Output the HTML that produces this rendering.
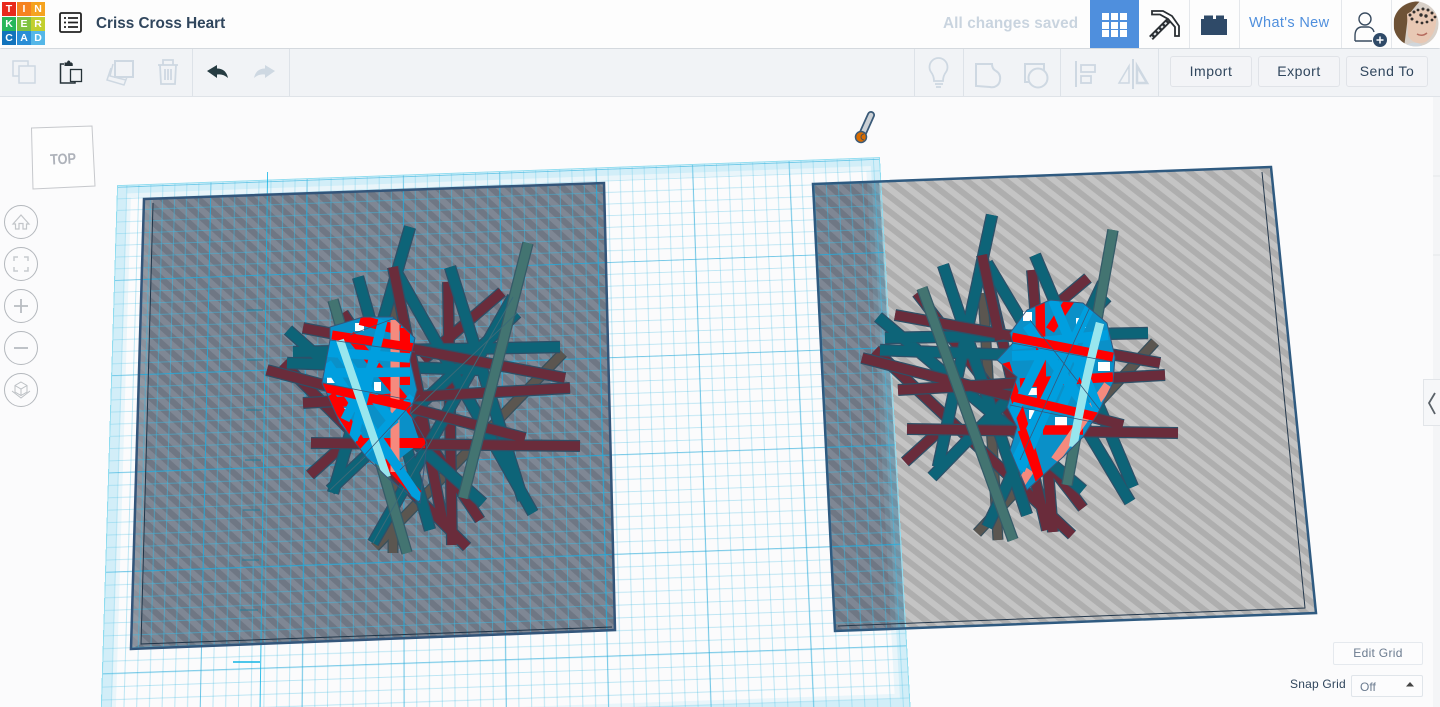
<!DOCTYPE html>
<html lang="en"><head><meta charset="utf-8"><title>Criss Cross Heart</title>
<style>
html,body{margin:0;padding:0;background:#fbfbfc;width:1440px;height:707px;overflow:hidden;font-family:"Liberation Sans",sans-serif}
#app{position:relative;width:1440px;height:707px;overflow:hidden;background:#fbfbfc}
.layer{position:absolute;left:0;top:0}
.plane{position:absolute;left:0;top:0;width:800px;height:600px;box-sizing:border-box;transform-origin:0 0;
transform:matrix3d(0.947964,-0.035591,0,-0.0000037384,-0.038203,0.843168,0,-0.00009773,0,0,1,0,118,186,0,1);
background-image:
linear-gradient(to right,rgba(30,165,215,.5) 1px,transparent 1px),
linear-gradient(to bottom,rgba(30,165,215,.5) 1px,transparent 1px),
linear-gradient(to right,rgba(60,185,225,.33) 1px,transparent 1px),
linear-gradient(to bottom,rgba(60,185,225,.33) 1px,transparent 1px);
background-size:101.3px 100%,100% 107px,12.66px 100%,100% 13.4px;
background-position:97.5px 0,0 1px,8.9px 0,0 1px}
.main{outline:1px solid #8fdcef}
.clipw{position:absolute;left:0;top:0;width:1440px;height:707px}
#band{position:absolute;inset:0;box-sizing:border-box;border:9px solid rgba(115,210,238,.3)}
#band2{position:absolute;inset:9px;box-sizing:border-box;border:5px solid rgba(115,210,238,.13)}
#origin{position:absolute;left:157px;top:-10px;bottom:0;width:1px;background:rgba(18,180,228,.85)}
#top{position:absolute;left:0;top:0;width:1440px;height:48px;background:#fdfdfd;box-shadow:0 1px 2px rgba(90,110,130,.35)}
#tools{position:absolute;left:0;top:49px;width:1440px;height:47px;background:#f1f3f6;border-bottom:1px solid #dfe3e8}
.t{position:absolute;white-space:nowrap}
.div{position:absolute;width:1px;background:#dde2e8}
.btn{position:absolute;top:7px;height:29px;background:#f3f4f7;border:1px solid #e0e3e8;border-radius:3px;box-sizing:content-box;text-align:center;line-height:29px;color:#30465d;font-size:14px;letter-spacing:.5px}
.logo{position:absolute;width:14px;height:14px;color:#fff;font-weight:bold;font-size:10.5px;line-height:14px;text-align:center}
</style></head><body><div id="app">

<svg class="layer" width="1440" height="707" viewBox="0 0 1440 707">
<defs>
<pattern id="sd" width="12" height="12" patternUnits="userSpaceOnUse" patternTransform="rotate(42)"><rect width="12" height="12" fill="#7f8794"/><rect width="12" height="6" fill="#6f7784"/></pattern>
<pattern id="sl" width="12" height="12" patternUnits="userSpaceOnUse" patternTransform="rotate(38)"><rect width="12" height="12" fill="#c4c4c4"/><rect width="12" height="6" fill="#aeaeae"/></pattern>
</defs>
<polygon points="144,199 604,183 615,630 131,649" fill="url(#sd)"/>
<polygon points="813,184 1271,167 1316,613 835,631" fill="url(#sl)"/>
<polygon points="813,184 879,181 905,629 835,631" fill="url(#sd)"/>
<polygon points="131,649 141,644 153,200 144,199" fill="#9ea3ab" opacity=".6"/>
</svg>

<div class="plane main"><div id="band"></div><div id="band2"></div><div id="origin"></div></div>
<div class="clipw" style="clip-path:polygon(144px 199px,604px 183px,615px 630px,131px 649px)"><div class="plane"></div></div>
<div class="clipw" style="clip-path:polygon(813px 184px,879px 181px,905px 629px,835px 631px)"><div class="plane"></div></div>

<svg class="layer" width="1440" height="707" viewBox="0 0 1440 707">
<defs>
<clipPath id="hl"><path d="M330,327 L363,317 L393,317 L415,338 L410,360 L417,390 L410,413 L427,443 L420,503 L390,480 L367,458 L340,423 L322,383 L330,340Z"/></clipPath>
<clipPath id="hr"><path d="M1010,333 L1027,310 L1050,300 L1083,303 L1107,323 L1115,357 L1113,383 L1098,413 L1083,437 L1063,457 L1027,490 L1010,450 L1017,427 L1007,407 L1017,377 L997,360 L1013,343Z"/></clipPath>
</defs>
<!-- ruler -->
<path d="M247,310H263M247,360H263M246,410H262M245,460H261M243,510H260M242,560H259M240,610H258" stroke="#1f7f9c" stroke-width="1" fill="none"/>
<path d="M233,662H260" stroke="#12b4e4" stroke-width="1.5" fill="none"/>
<!-- rectangle outlines -->
<polygon points="144,199 604,183 615,630 131,649" fill="none" stroke="#33557a" stroke-width="2.5"/>
<polyline points="153,203 141,644 612,627" fill="none" stroke="#1e3448" stroke-width="1"/>
<polygon points="813,184 1271,167 1316,613 835,631" fill="none" stroke="#2f5a80" stroke-width="2.5"/>
<polyline points="1262,172 1305,608 838,626" fill="none" stroke="#24384c" stroke-width="1"/>

<!-- left sticks -->
<g fill="none" stroke-linecap="butt">
<path stroke="#39505c" stroke-width="11" d="M563,353L375,547M393,553L393,303"/>
<path stroke="#5b5650" stroke-width="8.500" d="M563,353L375,547M393,553L393,303"/>
<path stroke="#2e4f66" stroke-width="12" d="M343,313L480,520M467,547L283,363M448,282L452,545M502,292L423,360M310,475L340,448M393,267L443,523"/>
<path stroke="#6a2c3b" stroke-width="9.500" d="M343,313L480,520M467,547L283,363M448,282L452,545M502,292L423,360M310,475L340,448M393,267L443,523"/>
<path stroke="#2d5068" stroke-width="12.500" d="M410,227L333,493M358,277L430,530M397,273L533,513M450,267L523,500M288,330L483,503M293,352L560,347M287,363L483,370M513,297L373,543M517,313L330,490"/>
<path stroke="#0d6478" stroke-width="10" d="M410,227L333,493M358,277L430,530M397,273L533,513M450,267L523,500M288,330L483,503M293,352L560,347M287,363L483,370M513,297L373,543M517,313L330,490"/>
<path stroke="#2e4f66" stroke-width="12" d="M303,328L565,378M267,370L525,438M303,403L570,388M311,443L580,446M393,267L420,400"/>
<path stroke="#6a2c3b" stroke-width="9.500" d="M303,328L565,378M267,370L525,438M303,403L570,388M311,443L580,446M393,267L420,400"/>
<path stroke="#355b68" stroke-width="11.500" d="M528,243L463,498M333,300L407,553"/>
<path stroke="#437471" stroke-width="9" d="M528,243L463,498M333,300L407,553"/>
<path stroke="#3a6a78" stroke-width="1" d="M517,313L330,490M513,297L373,543"/>
</g>
<!-- left heart -->
<path d="M330,327 L363,317 L393,317 L415,338 L410,360 L417,390 L410,413 L420,443 L385,470 L367,458 L340,423 L322,383 L330,340Z" fill="#0a90c8"/>
<g fill="#fff"><rect x="355" y="323" width="9" height="8"/><rect x="333" y="340" width="6" height="7"/><rect x="327" y="375" width="8" height="8"/><rect x="374" y="382" width="7" height="9"/><rect x="342" y="408" width="9" height="9"/><rect x="387" y="450" width="6" height="9"/><rect x="403" y="360" width="5" height="7"/></g>
<g clip-path="url(#hl)" fill="none">
<path stroke="#f00" stroke-width="10" d="M350,335L420,420M322,403L400,398M330,395L365,450M350,443L425,443M385,460L418,495M405,328L405,385M360,320L400,330"/>
<path stroke="#f58a7e" stroke-width="9" d="M395,320L395,472"/>
<path stroke="#009fdf" stroke-width="9.500" d="M327,363L420,500M325,352L410,358M322,373L410,372M413,397L363,453M330,340L395,425M345,420L375,360"/>
<path stroke="#f00" stroke-width="9" d="M332,335L415,348M322,387L410,407"/>
<path stroke="#009fdf" stroke-width="9.500" d="M383,320L353,440M358,430L345,450"/>
<path stroke="#98e6ee" stroke-width="8" d="M340,340L387,477"/>
</g>
<path d="M330,327 L363,317 L393,317 L415,338 L410,360 L417,390 L410,413 L427,443 L420,503 L390,480 L367,458 L340,423 L322,383 L330,340Z" fill="none" stroke="#37567a" stroke-width="1"/>
<path d="M330,340L415,352M322,383L410,400M350,335L395,318M400,470L427,443M360,460L420,395" fill="none" stroke="#37567a" stroke-width=".8"/>

<!-- right sticks -->
<g fill="none">
<path stroke="#39505c" stroke-width="11" d="M1155,342L977,533M983,293L998,540"/>
<path stroke="#5b5650" stroke-width="8.500" d="M1155,342L977,533M983,293L998,540"/>
<path stroke="#2e4f66" stroke-width="12" d="M917,293L1083,508M875,350L1072,535M982,255L1047,530M1032,270L1053,532M1088,278L1050,310M905,462L937,433"/>
<path stroke="#6a2c3b" stroke-width="9.500" d="M917,293L1083,508M875,350L1072,535M982,255L1047,530M1032,270L1053,532M1088,278L1050,310M905,462L937,433"/>
<path stroke="#2d5068" stroke-width="12.500" d="M992,215L938,467M943,265L1027,515M987,263L1130,502M1035,255L1133,487M878,317L1083,490M885,338L1148,333M880,350L1013,355M1103,283L987,527M1107,297L932,477"/>
<path stroke="#0d6478" stroke-width="10" d="M992,215L938,467M943,265L1027,515M987,263L1130,502M1035,255L1133,487M878,317L1083,490M885,338L1148,333M880,350L1013,355M1103,283L987,527M1107,297L932,477"/>
<path stroke="#2e4f66" stroke-width="12" d="M895,315L1160,363M862,358L1123,425M898,390L1165,375M907,429L1178,433M982,255L1000,340"/>
<path stroke="#6a2c3b" stroke-width="9.500" d="M895,315L1160,363M862,358L1123,425M898,390L1165,375M907,429L1178,433M982,255L1000,340"/>
<path stroke="#355b68" stroke-width="11.500" d="M1113,230L1067,485M922,288L1013,540"/>
<path stroke="#437471" stroke-width="9" d="M1113,230L1067,485M922,288L1013,540"/>
</g>
<!-- right heart -->
<path d="M1010,333 L1027,310 L1050,300 L1083,303 L1107,323 L1115,357 L1113,383 L1098,413 L1083,437 L1063,457 L1027,490 L1010,450 L1017,427 L1007,407 L1017,377 L997,360 L1013,343Z" fill="#0a90c8"/>
<g fill="#fff"><rect x="1023" y="312" width="9" height="9"/><rect x="1076" y="318" width="10" height="10"/><rect x="1098" y="362" width="12" height="9"/><rect x="1055" y="417" width="12" height="9"/><rect x="1028" y="388" width="10" height="7"/><rect x="1029" y="410" width="7" height="9"/><rect x="1020" y="447" width="6" height="7"/></g>
<g clip-path="url(#hr)" fill="none">
<path stroke="#f00" stroke-width="9.500" d="M1020,383L1113,377M1043,430L1083,430M1040,303L1042,413M1005,363L1040,480M1070,300L1050,330"/>
<path stroke="#f58a7e" stroke-width="9" d="M1108,385L1055,460M1030,470L1020,485"/>
<path stroke="#009fdf" stroke-width="10" d="M1053,300L1100,413M1090,307L1013,467M1027,325L1095,420M1108,335L1012,345M1012,356L1090,353M1075,345L1020,470M1010,420L1050,340M1090,340L1060,410"/>
<path stroke="#f00" stroke-width="9" d="M1012,337L1113,357M1013,397L1097,417"/>
<path stroke="#f00" stroke-width="9" d="M1022,430L1040,480"/>
<path stroke="#98e6ee" stroke-width="8.500" d="M1100,323Q1085,380 1073,447"/>
</g>
<path d="M1010,333 L1027,310 L1050,300 L1083,303 L1107,323 L1115,357 L1113,383 L1098,413 L1083,437 L1063,457 L1027,490 L1010,450 L1017,427 L1007,407 L1017,377 L997,360 L1013,343Z" fill="none" stroke="#37567a" stroke-width="1"/>
<path d="M1012,343L1113,362M1010,405L1097,423M1030,320L1100,410M1090,307L1020,460" fill="none" stroke="#37567a" stroke-width=".8"/>

<!-- cursor wrench -->
<path d="M871,115L862,135" stroke="#3a5a78" stroke-width="8" stroke-linecap="round"/>
<path d="M871,115L862,135" stroke="#ccd1d6" stroke-width="4.5" stroke-linecap="round"/>
<circle cx="861" cy="137" r="5.5" fill="#d96c00" stroke="#3a5a78" stroke-width="1.5"/>
<path d="M864,134A3,3 0 1 0 864,140" fill="none" stroke="#46505a" stroke-width="1"/>

<!-- view cube -->
<polygon points="31.500,128 92,126 95,186 33,189" fill="#fdfdfd" stroke="#c6c8cc" stroke-width="1"/>
<text x="63" y="164" font-family="Liberation Sans" font-size="15" font-weight="bold" fill="#aeb2ba" text-anchor="middle" textLength="26" lengthAdjust="spacingAndGlyphs" transform="rotate(-3 63 158)">TOP</text>
<!-- nav -->
<g fill="#fbfbfc" stroke="#b4b8bd" stroke-width="1">
<circle cx="21" cy="222" r="16.500"/><circle cx="21" cy="264" r="16.500"/><circle cx="21" cy="306" r="16.500"/><circle cx="21" cy="348" r="16.500"/><circle cx="21" cy="390" r="16.500"/>
</g>
<path d="M13,224L21,215L29,224H26.500V229H23V223.500H19V229H15.500V224Z" fill="none" stroke="#c2c5c9" stroke-width="1.2"/>
<path d="M14,261V257H18M24,257H28V261M28,267V271H24M18,271H14V267" fill="none" stroke="#c8cbcf" stroke-width="1.5"/>
<path d="M21,299V313M14,306H28" stroke="#b8bcc1" stroke-width="1.800"/>
<path d="M14,348H28" stroke="#b8bcc1" stroke-width="1.800"/>
<path d="M21,382L27,385.500V392L21,395.500L15,392V385.500ZM15,385.500L21,389L27,385.500M21,389V395.500M12,391L21,398L30,391" fill="none" stroke="#bcc0c4" stroke-width="1"/>

<!-- right gutter -->
<rect x="1433" y="97" width="7" height="610" fill="#f4f5f7"/>
<path d="M1433,176H1440M1433,255H1440" stroke="#e4e6ea"/>
<rect x="1423.500" y="379.500" width="17" height="46" fill="#f6f7f9" stroke="#e2e5e9"/>
<path d="M1435,393L1429,403L1435,414" fill="none" stroke="#5a6168" stroke-width="1.800"/>
</svg>

<div id="top">
<div class="logo" style="left:2px;top:2px;background:#e8291c">T</div>
<div class="logo" style="left:17px;top:2px;background:#f58220">I</div>
<div class="logo" style="left:31px;top:2px;background:#f5a31f">N</div>
<div class="logo" style="left:2px;top:17px;background:#27b65a">K</div>
<div class="logo" style="left:17px;top:17px;background:#7fc241">E</div>
<div class="logo" style="left:31px;top:17px;background:#c2cf2e">R</div>
<div class="logo" style="left:2px;top:31px;background:#1273bc">C</div>
<div class="logo" style="left:17px;top:31px;background:#2a8ed6">A</div>
<div class="logo" style="left:31px;top:31px;background:#55b7e8">D</div>
<svg class="layer" width="1440" height="48" viewBox="0 0 1440 48">
<rect x="60" y="13" width="21" height="19" rx="1.500" fill="#fff" stroke="#222" stroke-width="1.800"/>
<path d="M64,18H66M68,18H78M64,22.500H66M68,22.500H78M64,27H66M68,27H78" stroke="#222" stroke-width="1.800"/>
<rect x="1090" y="0" width="49" height="48" fill="#4f8fdd"/>
<g fill="#fff"><rect x="1102" y="13" width="7" height="7"/><rect x="1111" y="13" width="7" height="7"/><rect x="1120" y="13" width="7" height="7"/><rect x="1102" y="22" width="7" height="7"/><rect x="1111" y="22" width="7" height="7"/><rect x="1120" y="22" width="7" height="7"/><rect x="1102" y="30" width="7" height="7"/><rect x="1111" y="30" width="7" height="7"/><rect x="1120" y="30" width="7" height="7"/></g>
<path d="M1170,19L1151,38" stroke="#2a2f33" stroke-width="5.500"/>
<path d="M1170,19L1151,38" stroke="#e4e7ea" stroke-width="2" stroke-dasharray="2.500 2.500"/>
<path d="M1152,11H1163L1172,16L1179,26V36H1175V27L1168,19L1160,14.500H1152Z" fill="#fff" stroke="#2a2f33" stroke-width="1.800"/>
<path d="M1201,35V19H1204V15.500H1213V19H1216V15.500H1224V19H1227V35Z" fill="#2f4a68"/>
<circle cx="1365" cy="19" r="6" fill="none" stroke="#3a4c60" stroke-width="1.400"/>
<path d="M1355,41V36Q1355,28 1361,27H1369Q1373,28 1374,32M1355,41H1372" fill="none" stroke="#3a4c60" stroke-width="1.400"/>
<circle cx="1380" cy="40" r="7" fill="#2f4a68"/>
<path d="M1380,36.500V43.500M1376.500,40H1383.500" stroke="#fff" stroke-width="1.500"/>
<defs><clipPath id="av"><circle cx="1416" cy="24" r="22.500"/></clipPath></defs>
<g clip-path="url(#av)">
<rect x="1392" y="0" width="48" height="48" fill="#d8d0c8"/>
<path d="M1394,48V18Q1400,2 1420,1Q1412,10 1408,16L1404,48Z" fill="#6e5236"/>
<path d="M1420,1Q1432,4 1438,14L1436,5Z" fill="#8a6b4a"/>
<path d="M1407,14Q1422,4 1436,14Q1438,32 1426,42Q1414,46 1408,36Z" fill="#e8c8b4"/>
<g fill="#33302e"><circle cx="1410" cy="15" r="1.500"/><circle cx="1414" cy="12" r="1.500"/><circle cx="1418" cy="10" r="1.400"/><circle cx="1423" cy="9" r="1.500"/><circle cx="1428" cy="10" r="1.500"/><circle cx="1432" cy="13" r="1.500"/><circle cx="1435" cy="17" r="1.400"/><circle cx="1412" cy="19" r="1.500"/><circle cx="1417" cy="22" r="1.400"/><circle cx="1422" cy="23" r="1.400"/><circle cx="1427" cy="22" r="1.400"/><circle cx="1432" cy="20" r="1.400"/><circle cx="1421" cy="15" r="1.700"/><circle cx="1426" cy="16" r="1.700"/></g>
<path d="M1417,34Q1422,37 1427,33" stroke="#b56a5d" stroke-width="1.500" fill="none"/>
<path d="M1402,48Q1412,40 1420,44L1424,48Z" fill="#cfd6dc"/>
</g>
<path d="M1189.500,0V48M1239.500,0V48M1341.500,0V48M1391.500,0V48" stroke="#e4e7eb"/>
</svg>
<div class="t" style="left:96px;top:15px;font-size:15.300px;font-weight:bold;color:#30465d">Criss Cross Heart</div>
<div class="t" style="left:943px;top:15px;font-size:15.300px;font-weight:bold;color:#c9d4df;letter-spacing:.1px">All changes saved</div>
<div class="t" style="left:1249px;top:15px;font-size:14.500px;color:#4f8fdd;letter-spacing:.35px">What's New</div>
</div>

<div id="tools">
<div class="div" style="left:192px;top:0;height:47px"></div>
<div class="div" style="left:289px;top:0;height:47px"></div>
<div class="div" style="left:914px;top:0;height:47px"></div>
<div class="div" style="left:963px;top:0;height:47px"></div>
<div class="div" style="left:1060px;top:0;height:47px"></div>
<div class="div" style="left:1158px;top:0;height:47px"></div>
<svg class="layer" width="1440" height="47" viewBox="0 49 1440 47">
<g fill="none" stroke="#ced8e2" stroke-width="1.500">
<rect x="13" y="61" width="15" height="15"/><rect x="19" y="66" width="16" height="17" fill="#f1f3f6"/>
<path d="M111,68L107,80L124,85L127,77"/><path d="M113,64L110,76L126,80"/><rect x="115" y="61" width="18" height="16" fill="#f1f3f6" stroke-width="2"/>
<path d="M158,65H178M163,65V60H173V65M160,65L161,84H175L176,65M165,69V80M168,69V80M171,69V80" stroke-width="1.800"/>
<path d="M934,81Q934,76 931,72A9,9 0 1 1 946,72Q943,76 943,81ZM935,84H943M936,87H941" stroke-width="1.800"/>
<path d="M976,64H992Q992,69 996,71Q1001,74 1000,80A8,8 0 0 1 990,87L976,86Z" stroke-width="2"/>
<rect x="1025" y="64" width="19" height="18" stroke-width="2"/><circle cx="1038" cy="78" r="9.500" fill="#f1f3f6" stroke-width="2"/>
<path d="M1076,61V87" stroke-width="2"/><rect x="1081" y="65" width="14" height="7" stroke-width="1.800"/><rect x="1081" y="76" width="10" height="7" stroke-width="1.800"/>
<path d="M1133,59V89" stroke-width="2"/><path d="M1129,66L1119,83H1129Z"/><path d="M1137,66L1147,83H1137Z" stroke-width="2.500"/>
</g>
<path d="M64,64H60.500V83H75V76M72,66V64H68" fill="none" stroke="#263238" stroke-width="1.500"/>
<path d="M64.500,66V62.500H67Q67.500,60.500 68.500,60.500Q70,60.500 70.500,62.500H72V66Z" fill="#263238"/>
<rect x="70.500" y="69.500" width="11" height="12" fill="#f1f3f6" stroke="#263238" stroke-width="1.300"/>
<path d="M207,71L217,65V68.500Q226,68.500 228,78Q223,73.500 217,74.500V78Z" fill="#263c42"/>
<path d="M275,71L265,65V68.500Q256,68.500 254,78Q259,73.500 265,74.500V78Z" fill="#ced8e2"/>
</svg>
<div class="btn" style="left:1170px;width:80px">Import</div>
<div class="btn" style="left:1258px;width:80px">Export</div>
<div class="btn" style="left:1346px;width:80px">Send To</div>
</div>

<div class="t" style="left:1333px;top:642px;width:88px;height:21px;border:1px solid #e5e9ee;border-radius:2px;background:#fcfcfd;text-align:center;line-height:21px;font-size:12px;color:#6b7b8f;letter-spacing:.3px">Edit Grid</div>
<div class="t" style="left:1290px;top:677px;font-size:12px;color:#30465d;letter-spacing:.2px">Snap Grid</div>
<div class="t" style="left:1351px;top:675px;width:70px;height:20px;border:1px solid #e0e5ea;border-radius:2px;background:#fcfcfd;line-height:22px;font-size:12px;color:#6b7b8f;text-indent:8px">Off</div>
<svg class="layer" width="1440" height="707" viewBox="0 0 1440 707" style="pointer-events:none"><path d="M1406,686.500H1414L1410,682Z" fill="#444"/></svg>
</div></body></html>
